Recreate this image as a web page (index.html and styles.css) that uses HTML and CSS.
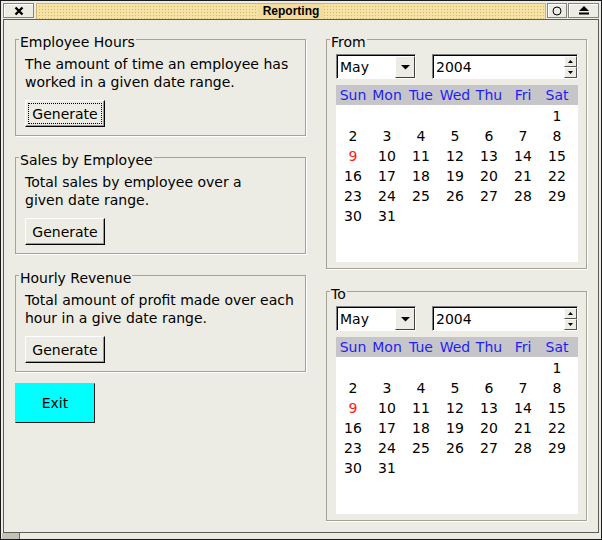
FILE: index.html
```html
<!DOCTYPE html>
<html>
<head>
<meta charset="utf-8">
<title>Reporting</title>
<link rel="stylesheet" href="styles.css">
</head>
<body>
<div class="window">
  <div class="titlebar">
    <div class="tb-btn tb-close"><svg width="10" height="10" viewBox="0 0 10 10"><path d="M1.5 1.5L8.5 8.5M8.5 1.5L1.5 8.5" stroke="#000" stroke-width="2.4"/></svg></div>
    <div class="tb-title"><span>Reporting</span></div>
    <div class="tb-btn tb-circle"><svg width="10" height="10" viewBox="0 0 10 10"><circle cx="5" cy="5" r="4" fill="none" stroke="#000" stroke-width="1"/></svg></div>
    <div class="tb-btn tb-eject"><svg width="10" height="9" viewBox="0 0 10 9"><path d="M5 0L10 5H0Z" fill="#000"/><rect x="0" y="6.5" width="10" height="2" fill="#000"/></svg></div>
  </div>

  <div class="client">
    <div class="left-col">
      <fieldset class="group">
        <legend>Employee Hours</legend>
        <p class="desc">The amount of time an employee has<br>worked in a given date range.</p>
        <div class="btn focused">Generate</div>
      </fieldset>
      <fieldset class="group">
        <legend>Sales by Employee</legend>
        <p class="desc">Total sales by employee over a<br>given date range.</p>
        <div class="btn">Generate</div>
      </fieldset>
      <fieldset class="group">
        <legend>Hourly Revenue</legend>
        <p class="desc">Total amount of profit made over each<br>hour in a give date range.</p>
        <div class="btn">Generate</div>
      </fieldset>
      <div class="exit">Exit</div>
    </div>

    <div class="right-col">
      <fieldset class="group cal-group">
        <legend>From</legend>
        <div class="controls">
          <div class="combo"><span class="combo-val">May</span><span class="combo-arrow"><svg width="9" height="5" viewBox="0 0 9 5"><path d="M0 0H9L4.5 4.5Z" fill="#000"/></svg></span></div>
          <div class="spin"><span class="spin-val">2004</span><span class="spin-btns"><span class="spin-b"><svg width="5" height="3" viewBox="0 0 5 3"><path d="M2.5 0L5 3H0Z" fill="#000"/></svg></span><span class="spin-b"><svg width="5" height="3" viewBox="0 0 5 3"><path d="M0 0H5L2.5 3Z" fill="#000"/></svg></span></span></div>
        </div>
        <div class="calendar">
          <div class="cal-head"><span>Sun</span><span>Mon</span><span>Tue</span><span>Wed</span><span>Thu</span><span>Fri</span><span>Sat</span></div>
          <div class="cal-body">
            <span></span><span></span><span></span><span></span><span></span><span></span><span>1</span>
            <span>2</span><span>3</span><span>4</span><span>5</span><span>6</span><span>7</span><span>8</span>
            <span class="today">9</span><span>10</span><span>11</span><span>12</span><span>13</span><span>14</span><span>15</span>
            <span>16</span><span>17</span><span>18</span><span>19</span><span>20</span><span>21</span><span>22</span>
            <span>23</span><span>24</span><span>25</span><span>26</span><span>27</span><span>28</span><span>29</span>
            <span>30</span><span>31</span>
          </div>
        </div>
      </fieldset>

      <fieldset class="group cal-group">
        <legend>To</legend>
        <div class="controls">
          <div class="combo"><span class="combo-val">May</span><span class="combo-arrow"><svg width="9" height="5" viewBox="0 0 9 5"><path d="M0 0H9L4.5 4.5Z" fill="#000"/></svg></span></div>
          <div class="spin"><span class="spin-val">2004</span><span class="spin-btns"><span class="spin-b"><svg width="5" height="3" viewBox="0 0 5 3"><path d="M2.5 0L5 3H0Z" fill="#000"/></svg></span><span class="spin-b"><svg width="5" height="3" viewBox="0 0 5 3"><path d="M0 0H5L2.5 3Z" fill="#000"/></svg></span></span></div>
        </div>
        <div class="calendar">
          <div class="cal-head"><span>Sun</span><span>Mon</span><span>Tue</span><span>Wed</span><span>Thu</span><span>Fri</span><span>Sat</span></div>
          <div class="cal-body">
            <span></span><span></span><span></span><span></span><span></span><span></span><span>1</span>
            <span>2</span><span>3</span><span>4</span><span>5</span><span>6</span><span>7</span><span>8</span>
            <span class="today">9</span><span>10</span><span>11</span><span>12</span><span>13</span><span>14</span><span>15</span>
            <span>16</span><span>17</span><span>18</span><span>19</span><span>20</span><span>21</span><span>22</span>
            <span>23</span><span>24</span><span>25</span><span>26</span><span>27</span><span>28</span><span>29</span>
            <span>30</span><span>31</span>
          </div>
        </div>
      </fieldset>
    </div>
  </div>

  <div class="statusbar"><div class="grip"></div></div>
</div>
</body>
</html>
```

FILE: styles.css
```css
* { box-sizing: border-box; }

html, body {
  margin: 0;
  padding: 0;
  background: #edece4;
}

body {
  font-family: "DejaVu Sans", "Bitstream Vera Sans", sans-serif;
  font-size: 14px;
  color: #000;
}

.window {
  width: 602px;
  height: 540px;
  border: 1px solid #1a1a1a;
  padding: 2px 2px 0 2px;
  background: #edece4;
  display: flex;
  flex-direction: column;
}

/* ---------- title bar ---------- */
.titlebar {
  height: 16px;
  display: flex;
  gap: 1px;
  flex: none;
}

.tb-btn {
  height: 15px;
  border: 1px solid #858580;
  box-shadow: inset 1px 1px 0 #fff;
  background: #edece4;
  display: flex;
  align-items: center;
  justify-content: center;
}

.tb-close { width: 31px; margin-right: 1px; }
.tb-circle { width: 20px; margin-left: 0; }
.tb-eject { width: 31px; }

.tb-title {
  flex: 1;
  height: 16px;
  border: 1px solid #d3b86c;
  border-bottom: none;
  background-color: #f5e2a6;
  background-image: radial-gradient(circle, #d8b65e 0.75px, transparent 1px);
  background-size: 3px 3px;
  background-position: 1px 1px;
  display: flex;
  justify-content: center;
}

.tb-title span {
  font-family: "Liberation Sans", Arial, sans-serif;
  font-weight: bold;
  font-size: 12px;
  line-height: 15px;
  padding: 0 5px;
  background: #f3dc9c;
}

/* ---------- client area ---------- */
.client {
  height: 514px;
  flex: none;
  border: 1px solid #5c5c58;
  background: #edece4;
  display: flex;
  align-items: flex-start;
  gap: 20px;
  padding: 9px 11px 0 11px;
}

.left-col {
  width: 291px;
  display: flex;
  flex-direction: column;
  gap: 11px;
}

.right-col {
  width: 261px;
  display: flex;
  flex-direction: column;
  gap: 12px;
}

.group {
  margin: 0;
  min-width: 0;
  border: 1px solid #a4a396;
  box-shadow: 1px 1px 0 #ffffff;
  padding: 5px 8px 8px 9px;
}

.group legend {
  padding: 5px 1px 0 1px;
  margin-left: -6px;
  font-size: 14px;
  line-height: 16px;
}

.desc {
  margin: 0;
  line-height: 18px;
  white-space: nowrap;
}

.btn {
  margin-top: 9px;
  width: 80px;
  height: 27px;
  border: 1px solid;
  border-color: #ffffff #000000 #000000 #ffffff;
  box-shadow: inset -1px -1px 0 #9c9b92;
  background: #edece4;
  display: flex;
  align-items: center;
  justify-content: center;
  line-height: 16px;
}

.btn.focused {
  outline: 1px dotted #000;
  outline-offset: -4px;
}

.exit {
  width: 80px;
  height: 40px;
  background: #00ffff;
  border: 1px solid;
  border-color: #00ffff #1a1a1a #1a1a1a #00ffff;
  display: flex;
  align-items: center;
  justify-content: center;
}

/* ---------- date pickers ---------- */
.cal-group {
  padding: 4px 8px 6px 9px;
}

.controls {
  display: flex;
  justify-content: space-between;
}

.combo {
  width: 80px;
  height: 25px;
  border: 1px solid;
  border-color: #808080 #ffffff #ffffff #808080;
  box-shadow: inset 1px 1px 0 #000;
  background: #fff;
  display: flex;
}

.combo-val {
  flex: 1;
  padding: 1px 0 0 3px;
  line-height: 22px;
}

.combo-arrow {
  width: 20px;
  margin: 1px 0 0 0;
  border: 1px solid;
  border-color: #ffffff #404040 #404040 #ffffff;
  background: #edece4;
  display: flex;
  align-items: center;
  justify-content: center;
}

.spin {
  width: 146px;
  height: 25px;
  border: 1px solid;
  border-color: #808080 #ffffff #ffffff #808080;
  box-shadow: inset 1px 1px 0 #000;
  background: #fff;
  display: flex;
}

.spin-val {
  flex: 1;
  padding: 1px 0 0 3px;
  line-height: 22px;
}

.spin-btns {
  width: 13px;
  margin-top: 1px;
  display: flex;
  flex-direction: column;
}

.spin-b {
  flex: 1;
  border: 1px solid;
  border-color: #ffffff #505050 #505050 #ffffff;
  background: #edece4;
  display: flex;
  align-items: center;
  justify-content: center;
}

.calendar {
  margin-top: 6px;
  width: 242px;
}

.cal-head {
  height: 20px;
  background: #c6c5ca;
  color: #1f1ff0;
  display: grid;
  grid-template-columns: repeat(7, 34px);
  line-height: 20px;
  text-align: center;
}

.cal-body {
  height: 157px;
  background: #ffffff;
  padding-top: 1px;
  display: grid;
  grid-template-columns: repeat(7, 34px);
  grid-auto-rows: 20px;
  align-content: start;
  line-height: 20px;
  text-align: center;
}

.cal-body .today {
  color: #ff1a1a;
}

/* ---------- status bar ---------- */
.statusbar {
  height: 6px;
  flex: none;
  display: flex;
}

.grip {
  width: 18px;
  margin-left: -1px;
  background: #c3c2b6;
  border-right: 1px solid #6a6a66;
}
```
